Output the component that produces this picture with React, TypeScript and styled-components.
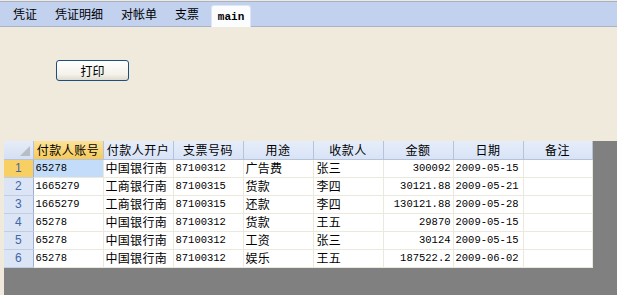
import React from 'react';
import styled, { createGlobalStyle, css } from 'styled-components';

type Row = {
  account: string;
  bank: string;
  cheque: string;
  usage: string;
  payee: string;
  amount: string;
  date: string;
  note: string;
};

const rows: Row[] = [
  { account: '65278', bank: '中国银行南', cheque: '87100312', usage: '广告费', payee: '张三', amount: '300092', date: '2009-05-15', note: '' },
  { account: '1665279', bank: '工商银行南', cheque: '87100315', usage: '货款', payee: '李四', amount: '30121.88', date: '2009-05-21', note: '' },
  { account: '1665279', bank: '工商银行南', cheque: '87100315', usage: '还款', payee: '李四', amount: '130121.88', date: '2009-05-28', note: '' },
  { account: '65278', bank: '中国银行南', cheque: '87100312', usage: '货款', payee: '王五', amount: '29870', date: '2009-05-15', note: '' },
  { account: '65278', bank: '中国银行南', cheque: '87100312', usage: '工资', payee: '张三', amount: '30124', date: '2009-05-15', note: '' },
  { account: '65278', bank: '中国银行南', cheque: '87100312', usage: '娱乐', payee: '王五', amount: '187522.2', date: '2009-06-02', note: '' },
];

const headers = ['付款人账号', '付款人开户', '支票号码', '用途', '收款人', '金额', '日期', '备注'];
const tabs = ['凭证', '凭证明细', '对帐单', '支票'];

export default function App() {
  return (
    <>
      <GlobalStyle />
      <Page>
        <TabBar>
          {tabs.map((t) => (
            <Tab key={t}>{t}</Tab>
          ))}
          <ActiveTab>main</ActiveTab>
        </TabBar>

        <ButtonArea>
          <PrintButton>打印</PrintButton>
        </ButtonArea>

        <GridPanel>
          <Grid>
            <colgroup>
              <col style={{ width: 29 }} />
              {headers.map((h, i) => (
                <col key={h} style={{ width: i === headers.length - 1 ? 69 : 70 }} />
              ))}
            </colgroup>
            <thead>
              <tr>
                <Corner>
                  <CornerMark />
                </Corner>
                {headers.map((h, i) => (
                  <HeadCell key={h} $active={i === 0}>{h}</HeadCell>
                ))}
              </tr>
            </thead>
            <tbody>
              {rows.map((r, i) => (
                <tr key={i}>
                  <RowHead $active={i === 0}>{i + 1}</RowHead>
                  <Cell $mono $selected={i === 0}>{r.account}</Cell>
                  <Cell>{r.bank}</Cell>
                  <Cell $mono>{r.cheque}</Cell>
                  <Cell>{r.usage}</Cell>
                  <Cell $indent>{r.payee}</Cell>
                  <Cell $mono $right>{r.amount}</Cell>
                  <Cell $mono>{r.date}</Cell>
                  <Cell>{r.note}</Cell>
                </tr>
              ))}
            </tbody>
          </Grid>
        </GridPanel>
      </Page>
    </>
  );
}

const GlobalStyle = createGlobalStyle`
  html, body {
    margin: 0;
    padding: 0;
    background: #efeadc;
    font-family: "Noto Sans CJK SC", "Liberation Sans", sans-serif;
    font-size: 12px;
    color: #000;
  }
`;

const Page = styled.div`
  height: 295px;
  width: 617px;
  display: flex;
  flex-direction: column;
  overflow: hidden;
`;

const TabBar = styled.div`
  margin-top: 1px;
  height: 24px;
  background: #c1d1ee;
  border-top: 1px solid #a8b0c8;
  border-bottom: 1px solid #aab3cb;
  display: flex;
  align-items: flex-end;
  padding-left: 4px;
`;

const Tab = styled.div`
  height: 24px;
  line-height: 24px;
  padding: 0 9px;
  font-size: 12px;
`;

const ActiveTab = styled.div`
  margin-left: 3px;
  margin-bottom: -1px;
  height: 22px;
  line-height: 22px;
  width: 40px;
  text-align: center;
  background: #fbfcfe;
  border-radius: 3px 3px 0 0;
  border: 1px solid #dfe5f2;
  border-bottom: none;
  box-sizing: border-box;
  font-family: "Liberation Mono", monospace;
  font-weight: bold;
  font-size: 11px;
`;

const ButtonArea = styled.div`
  height: 114px;
  padding: 33px 0 0 56px;
  box-sizing: border-box;
`;

const PrintButton = styled.button`
  width: 73px;
  height: 21px;
  padding: 0;
  border: 1px solid #1d4f7e;
  border-radius: 3px;
  background: linear-gradient(#ffffff, #f4f2ea 70%, #dedbd0);
  font-family: "Noto Sans CJK SC", sans-serif;
  font-size: 12px;
  color: #000;
  line-height: 19px;
`;

const GridPanel = styled.div`
  flex: 1;
  margin-left: 4px;
  background: #808080;
`;

const Grid = styled.table`
  border-collapse: collapse;
  table-layout: fixed;
  width: 588px;
  background: #fff;

  tr {
    height: 18px;
  }
`;

const headBase = css`
  height: 17px;
  padding: 0;
  line-height: 16px;
  box-sizing: border-box;
  border-right: 1px solid #b7c3db;
  border-bottom: 1px solid #b7c3db;
`;

const Corner = styled.th`
  ${headBase};
  position: relative;
  background: linear-gradient(#e6ecf8, #d6e0f2);
`;

const CornerMark = styled.span`
  position: absolute;
  right: 3px;
  bottom: 3px;
  width: 0;
  height: 0;
  border-left: 10px solid transparent;
  border-bottom: 10px solid #b8bcc4;
`;

const HeadCell = styled.th<{ $active?: boolean }>`
  ${headBase};
  font-weight: normal;
  font-size: 12px;
  letter-spacing: 0.5px;
  text-align: center;
  white-space: nowrap;
  overflow: hidden;
  background: ${(p) => (p.$active ? 'linear-gradient(#fbe29a, #f6ca58)' : 'linear-gradient(#e6edfa, #d8e3f6)')};
`;

const RowHead = styled.td<{ $active?: boolean }>`
  height: 17px;
  padding: 0;
  line-height: 16px;
  text-align: center;
  font-family: "Liberation Sans", sans-serif;
  font-size: 12px;
  color: #4466a6;
  border-right: 1px solid #9fb0d2;
  border-bottom: 1px solid #c3cde2;
  background: ${(p) => (p.$active ? '#f8cf63' : '#dbe5f6')};
`;

const Cell = styled.td<{ $mono?: boolean; $right?: boolean; $selected?: boolean; $indent?: boolean }>`
  height: 17px;
  line-height: 16px;
  padding: 0 ${(p) => (p.$right ? '2px' : '0')} 0 ${(p) => (p.$indent ? '3px' : '2px')};
  border-right: 1px solid #ebe8dc;
  border-bottom: 1px solid #ebe8dc;
  white-space: nowrap;
  overflow: hidden;
  text-align: ${(p) => (p.$right ? 'right' : 'left')};
  background: ${(p) => (p.$selected ? '#c2dcfa' : '#fff')};
  font-family: ${(p) => (p.$mono ? '"Liberation Mono", monospace' : '"Noto Sans CJK SC", sans-serif')};
  font-size: ${(p) => (p.$mono ? '10.5px' : '12px')};
  letter-spacing: ${(p) => (p.$mono ? '0' : '0.3px')};
`;
